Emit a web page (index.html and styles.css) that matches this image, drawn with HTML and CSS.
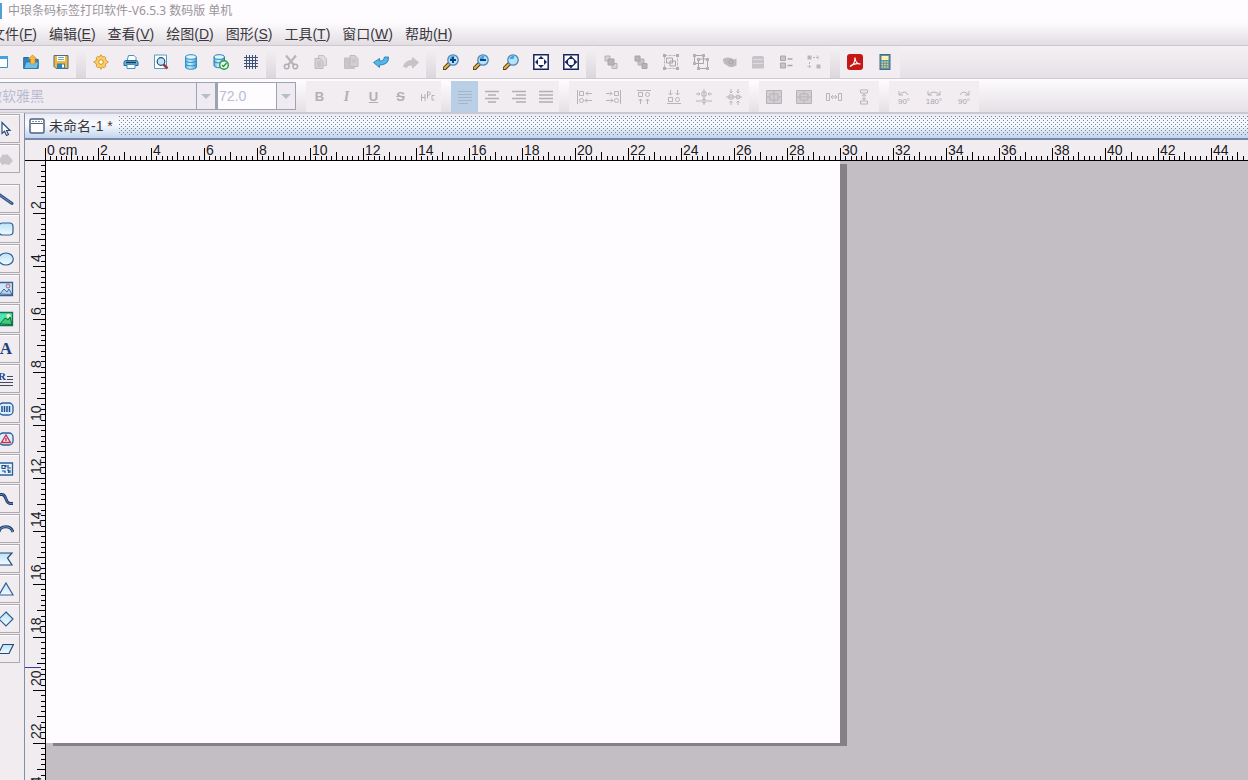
FILE: index.html
```html
<!DOCTYPE html>
<html lang="zh-CN">
<head>
<meta charset="utf-8">
<title>中琅条码标签打印软件</title>
<link rel="stylesheet" href="styles.css">
</head>
<body>
<svg class="defs" aria-hidden="true">
  <defs>
    <linearGradient id="sky" x1="0" y1="0" x2="0" y2="1"><stop offset="0" stop-color="#b9e2f7"/><stop offset="1" stop-color="#f4fbff"/></linearGradient>
    <linearGradient id="blue" x1="0" y1="0" x2="1" y2="0"><stop offset="0" stop-color="#56b4e4"/><stop offset=".4" stop-color="#d3f0fc"/><stop offset="1" stop-color="#3d9fd6"/></linearGradient>
    <pattern id="hticks" width="53" height="12" patternUnits="userSpaceOnUse">
      <path class="tick" d="M0 0h1v12h-1zM26 4h1v8h-1zM5 8h1v4h-1zM11 8h1v4h-1zM16 8h1v4h-1zM21 8h1v4h-1zM32 8h1v4h-1zM37 8h1v4h-1zM42 8h1v4h-1zM48 8h1v4h-1z"/>
    </pattern>
    <pattern id="vticks" width="12" height="53" patternUnits="userSpaceOnUse">
      <path class="tick" d="M0 0v1h12v-1zM4 26v1h8v-1zM8 5v1h4v-1zM8 11v1h4v-1zM8 16v1h4v-1zM8 21v1h4v-1zM8 32v1h4v-1zM8 37v1h4v-1zM8 42v1h4v-1zM8 48v1h4v-1z"/>
    </pattern>
    <symbol id="lens" viewBox="0 0 16 16"><path d="M1.500 14.500 6.500 9.500" stroke="#4d3a1c" stroke-width="4" stroke-linecap="round"/><path d="M1.800 14 6 10" stroke="#e3b04b" stroke-width="2.400" stroke-linecap="round"/><circle cx="10" cy="6" r="5.200" fill="#b5e4fa" stroke="#4a87b4" stroke-width="1.300"/><path d="M6.500 5a4 4 0 0 1 5-3l-1 3z" fill="#41a5db"/></symbol>
    <symbol id="frame" viewBox="0 0 16 16"><path d="M.8.8h14.400v14.400H.8z" fill="#fff" stroke="#17275d" stroke-width="1.500"/></symbol>
  </defs>
</svg>
<div class="app">
  <header class="title">
    <span class="title-icon"></span>
    <span>中琅条码标签打印软件-V6.5.3 数码版 单机</span>
  </header>
  <nav class="menu">
    <button>文件(<u>F</u>)</button><button>编辑(<u>E</u>)</button><button>查看(<u>V</u>)</button><button>绘图(<u>D</u>)</button><button>图形(<u>S</u>)</button><button>工具(<u>T</u>)</button><button>窗口(<u>W</u>)</button><button>帮助(<u>H</u>)</button>
  </nav>

  <div class="bar">
    <div class="group">
      <button aria-label="新建"><svg viewBox="0 0 16 16"><path d="M1.500 2.500h13v11h-13z" fill="#fff" stroke="#3c8ec4"/><path d="M1 2h14v3H1z" fill="#3fa3dc"/></svg></button>
      <button aria-label="打开"><svg viewBox="0 0 16 16"><path d="M.7 3.500h5l1 2h8.500v9H.7z" fill="#2f86c0" stroke="#256b9d"/><path d="M1 14.500 3 8h12.500l-1.300 6.500z" fill="#6cc1ea" stroke="#256b9d" stroke-width=".7"/><path d="m9.500 1 4.500 4h-2v5H7.500V5h-2z" fill="#f6b943" stroke="#c98a22" stroke-width=".7"/></svg></button>
      <button aria-label="保存"><svg viewBox="0 0 16 16"><path d="M1 1.500h14v13H3l-2-2z" fill="#f1b83c" stroke="#4f6b86"/><path d="M4 2h8v5H4z" fill="#fff"/><path d="M5 3.500h6M5 5.500h6" stroke="#68a6cc"/><path d="M4 9.500h8v5H4z" fill="#2e83b9"/><path d="M9 10.500h2v3H9z" fill="#fff"/></svg></button>
    </div>
    <span class="grip"></span>
    <div class="group">
      <button aria-label="设置"><svg viewBox="0 0 16 16"><path d="m8 .7 1.500 2.300 2-.6 1.300 1.300-.5 2L15.300 8l-3 2 .5 2.300-1.500 1.300-2-.6L8 15.300 6.500 13l-2 .6-1.300-1.300.5-2.300L.7 8l3-2-.5-2.300 1.300-1.300 2 .6z" fill="#fbd069" stroke="#d59c3d"/><circle cx="8" cy="8" r="2.300" fill="#fff" stroke="#cf8c22"/></svg></button>
      <button aria-label="打印"><svg viewBox="0 0 16 16"><path d="M4 7 5.500 1.500H11l2 2V7" fill="#fff" stroke="#3f93c4"/><path d="M1 8.500Q1 6.500 3 6.500h10q2 0 2 2v3H1z" fill="#64b3dd" stroke="#2a6591"/><path d="M3 8.500h10" stroke="#173d5f" stroke-width="1.500"/><path d="M4 10.500h8v4H4z" fill="#fff" stroke="#3f93c4"/></svg></button>
      <button aria-label="打印预览"><svg viewBox="0 0 16 16"><path d="M1.500 1h12v13.500h-12z" fill="#fff" stroke="#4e9cc9"/><path d="m10.500 10.500 4 4" stroke="#9a3b45" stroke-width="2.500"/><circle cx="8" cy="7.500" r="3.800" fill="#bde7f9" stroke="#2c4a69" stroke-width="1.200"/></svg></button>
      <button aria-label="数据库"><svg viewBox="0 0 16 16"><path d="M2.500 3v10c0 3 11 3 11 0V3" fill="url(#blue)" stroke="#2c8fc6"/><path d="M2.500 6.500c0 2.500 11 2.500 11 0M2.500 10c0 2.500 11 2.500 11 0" fill="none" stroke="#2c8fc6"/><ellipse cx="8" cy="3" rx="5.500" ry="2.300" fill="#e1f6ff" stroke="#2c8fc6"/></svg></button>
      <button aria-label="数据库检查"><svg viewBox="0 0 16 16"><path d="M1 3v8.500c0 3 10.500 3 10.500 0V3" fill="url(#blue)" stroke="#2c7fae"/><path d="M1 7c0 2.500 10.500 2.500 10.500 0" fill="none" stroke="#2c7fae"/><ellipse cx="6.200" cy="3" rx="5.200" ry="2.300" fill="#e1f6ff" stroke="#2c7fae"/><circle cx="11" cy="11" r="4.300" fill="#edfbed" stroke="#249a49" stroke-width="1.400"/><path d="m9 11 1.500 1.500 3-3.500" fill="none" stroke="#249a49" stroke-width="1.400"/></svg></button>
      <button aria-label="网格"><svg viewBox="0 0 16 16"><path d="M3.500 1v14M6.500 1v14M9.500 1v14M12.500 1v14M1 3.500h14M1 6.500h14M1 9.500h14M1 12.500h14" stroke="#3b5379"/></svg></button>
    </div>
    <span class="grip"></span>
    <div class="group">
      <button disabled aria-label="剪切"><svg viewBox="0 0 16 16"><path d="M3 1.500 11 11M13 1.500 5 11" stroke="#b9b5ba" stroke-width="2.200"/><circle cx="3.700" cy="12.500" r="2.300" fill="none" stroke="#b1adb2" stroke-width="1.500"/><circle cx="12.300" cy="12.500" r="2.300" fill="none" stroke="#b1adb2" stroke-width="1.500"/></svg></button>
      <button disabled aria-label="复制"><svg viewBox="0 0 16 16"><path d="M5.500 1.500h5l3 3v7h-8z" fill="#dedadf" stroke="#c3bfc4"/><path d="M2 4.500h5l3 3v7H2z" fill="#d5d1d6" stroke="#bdb9be"/><path d="M4 8h4M4 10h4M4 12h4" stroke="#bdb9be"/></svg></button>
      <button disabled aria-label="粘贴"><svg viewBox="0 0 16 16"><path d="M1.500 4h10v10.500h-10z" fill="#c9c5ca" stroke="#c3bfc4"/><path d="M7 1.500h5l3 3v8H7z" fill="#d3cfd4" stroke="#bdb9be"/><path d="M9 6h4M9 8h4" stroke="#c0bcc1"/></svg></button>
      <button aria-label="撤销"><svg viewBox="0 0 16 16"><path d="m.5 8.500 6-4v2.500q4 .5 5-4h4q.5 8-9 8v2.500z" fill="#55b7e9" stroke="#2b7eb0" stroke-width=".9"/></svg></button>
      <button disabled aria-label="重做"><svg viewBox="0 0 16 16"><path d="m15.500 8.500-6-5v3q-7-.5-9 6l3 1q1-3 6-2.500v3z" fill="#c7c3c8" stroke="#bfbbc0" stroke-width=".8"/></svg></button>
    </div>
    <span class="grip"></span>
    <div class="group">
      <button aria-label="放大"><svg viewBox="0 0 16 16"><use href="#lens"/><path d="M7 6h6M10 3v6" stroke="#153d83" stroke-width="2"/></svg></button>
      <button aria-label="缩小"><svg viewBox="0 0 16 16"><use href="#lens"/><path d="M7 6h6" stroke="#153d83" stroke-width="2"/></svg></button>
      <button aria-label="缩放"><svg viewBox="0 0 16 16"><use href="#lens"/></svg></button>
      <button aria-label="适合页面"><svg viewBox="0 0 16 16"><use href="#frame"/><path d="m8 2-3 3h6zM8 14l-3-3h6zM2 8l3-3v6zM14 8l-3-3v6z" fill="#17275d"/></svg></button>
      <button aria-label="适合内容"><svg viewBox="0 0 16 16"><use href="#frame"/><path d="M6 4.500h4L11.500 6v4L10 11.500H6L4.500 10V6z" fill="#fff" stroke="#17275d" stroke-width="1.200"/><path d="m8 1.500-2.500 3h5zM8 14.500l-2.500-3h5zM1.500 8l3-2.500v5zM14.500 8l-3-2.500v5z" fill="#17275d"/></svg></button>
    </div>
    <span class="grip"></span>
    <div class="group">
      <button disabled aria-label="置前"><svg viewBox="0 0 16 16"><path d="M2 2h5v5H2zM9 9.500h5v5H9z" fill="#d8d4d9" stroke="#b5b1b6"/><path d="M5 5h6v6H5z" fill="#b7b3b8" stroke="#a8a4a9"/></svg></button>
      <button disabled aria-label="置后"><svg viewBox="0 0 16 16"><path d="M5 5h6v6H5z" fill="#c5c1c6" stroke="#b3afb4"/><path d="M2 2h5v5H2zM9 9.500h5v5H9z" fill="#b7b3b8" stroke="#a8a4a9"/></svg></button>
      <button disabled aria-label="组合"><svg viewBox="0 0 16 16"><path d="M1.500 1.500h13v13h-13z" fill="none" stroke="#bcb8bd" stroke-dasharray="3 1"/><path d="M3.500 4h6v5h-6zM7 7h5.500v5H7z" fill="#eeeaef" stroke="#a9a5aa"/><path d="M0 0h3v3H0zM13 0h3v3h-3zM0 13h3v3H0zM13 13h3v3h-3z" fill="#b0acb1"/></svg></button>
      <button disabled aria-label="取消组合"><svg viewBox="0 0 16 16"><path d="M1.500 1.500h9v8h-9zM5.500 5h9v9.500h-9z" fill="none" stroke="#a9a5aa"/><path d="M0 0h3v3H0zM9 0h3v3H9zM0 8h3v3H0zM4 4h3v3H4zM13 4h3v3h-3zM4 13h3v3H4zM13 13h3v3h-3z" fill="#b5b1b6"/></svg></button>
      <span class="narrow">
      <button disabled aria-label="锁定"><svg viewBox="0 0 16 16"><path d="M1 5q6-3 11 .5l2.500-1v7Q8 15 4.500 11 1 10 1 5z" fill="#bdb9be"/><circle cx="9" cy="8" r="2" fill="none" stroke="#a8a4a9"/></svg></button>
      <button disabled aria-label="解锁"><svg viewBox="0 0 16 16"><path d="M2 4q0-2 2-2h8q2 0 2 2v10.500H2z" fill="#c7c3c8"/><path d="M3 5.500h10M3 9.500h10" stroke="#dfdbe0"/></svg></button>
      <button disabled aria-label="排列"><svg viewBox="0 0 16 16"><path d="M2.500 2h5v4.500h-5zM2.500 9h5v5h-5z" fill="#c8c4c9" stroke="#aaa6ab"/><path d="M9.500 5h5M9.500 11.500h5" stroke="#aaa6ab" stroke-width="1.500"/></svg></button>
      <button disabled aria-label="替换"><svg viewBox="0 0 16 16"><path d="M1.500 1.500h4v4h-4zM10.500 10.500h4v4h-4z" fill="#bab6bb"/><path d="M7 3.500h5m-1-2 2 2-2 2M3.500 8v6m-2-2 2 2 2-2" fill="none" stroke="#b3afb4" stroke-dasharray="2 1"/></svg></button>
      </span>
    </div>
    <span class="grip"></span>
    <div class="group">
      <button aria-label="导出PDF"><svg viewBox="0 0 16 16"><rect width="16" height="16" rx="3" fill="#c61616"/><path d="M3 12.500c3-1 5-5 5-9 0 4 2.500 6.500 5.500 6.500-4-1-8 0-10.500 2.500z" fill="none" stroke="#fff" stroke-width="1.200"/></svg></button>
      <button aria-label="计算器"><svg viewBox="0 0 16 16"><rect x="3" y=".5" width="10" height="15" fill="#5d93a8" stroke="#3d6d88"/><path d="M4.500 2h7v4h-7z" fill="#fff2a4"/><path d="M4.500 8h7M4.500 10.500h7M4.500 13h7" stroke="#e3d17a" stroke-width="1.500" stroke-dasharray="1.700 .9"/></svg></button>
    </div>
  </div>

  <div class="bar format">
    <div class="combo family">
      <select disabled aria-label="字体"><option>微软雅黑</option></select><span class="arrow"></span>
    </div>
    <div class="combo size">
      <input type="text" value="72.0" disabled aria-label="字号"><button disabled class="arrow" aria-label="选择字号"></button>
    </div>
    <span class="grip"></span>
    <div class="group text">
      <button disabled><b>B</b></button><button disabled><i>I</i></button><button disabled><u>U</u></button><button disabled><s>S</s></button>
      <button disabled aria-label="字符间距"><svg viewBox="0 0 16 16"><path d="M1.500 5v7M1.500 8.500h3.500M5 5v7M7.500 2.500v7M7.500 3h2l1 1.500-1 1.500h-2M14.500 6.500h-2.500v4.500h2.500" fill="none" stroke="#b3afb4"/></svg></button>
    </div>
    <span class="grip"></span>
    <div class="group text">
      <button disabled class="on" aria-label="左对齐"><svg viewBox="0 0 16 16"><path d="M1 2.500h14M1 5.500h14M1 8.500h14M1 11.500h14M1 14.500h10" stroke="#a5b5c6"/></svg></button>
      <button disabled aria-label="居中"><svg viewBox="0 0 16 16"><path d="M1 2.500h14M4 6h8M1 9.500h14M4 13h8" stroke="#b3afb4" stroke-width="1.300"/></svg></button>
      <button disabled aria-label="右对齐"><svg viewBox="0 0 16 16"><path d="M1 2.500h14M5 6h10M1 9.500h14M5 13h10" stroke="#b3afb4" stroke-width="1.300"/></svg></button>
      <button disabled aria-label="两端对齐"><svg viewBox="0 0 16 16"><path d="M1 2.500h14M1 6h14M1 9.500h14M1 13h14" stroke="#b3afb4" stroke-width="1.500"/></svg></button>
    </div>
    <span class="grip"></span>
    <div class="group line">
      <button disabled aria-label="靠左"><svg viewBox="0 0 16 16"><path d="M1.500 1v14M3.500 2.500h4v4h-4zM16 4.500H10m2-2-2 2 2 2M16 11.500H9m2-2-2 2 2 2"/><circle cx="5.500" cy="11.500" r="2"/></svg></button>
      <button disabled aria-label="靠右"><svg viewBox="0 0 16 16"><path d="M14.500 1v14M8.500 2.500h4v4h-4zM0 4.500h6m-2-2 2 2-2 2M0 11.500h7m-2-2 2 2-2 2"/><circle cx="10.500" cy="11.500" r="2"/></svg></button>
      <button disabled aria-label="靠上"><svg viewBox="0 0 16 16"><path d="M1 1.500h14M2.500 3.500h4v4h-4zM4.500 15v-5m-2 2 2-2 2 2M11.500 15v-5m-2 2 2-2 2 2"/><circle cx="11.500" cy="5.500" r="2"/></svg></button>
      <button disabled aria-label="靠下"><svg viewBox="0 0 16 16"><path d="M1 14.500h14M2.500 8.500h4v4h-4zM4.500 1v5m-2-2 2 2 2-2M11.500 1v5m-2-2 2 2 2-2"/><circle cx="11.500" cy="10.500" r="2"/></svg></button>
      <button disabled aria-label="水平居中"><svg viewBox="0 0 16 16"><path d="M8 0v16M6 3h4v4H6zM0 5h4m-1.500-1.500L4 5 2.500 6.500M16 5h-4m1.500-1.500L12 5l1.500 1.500M0 12h5M16 12h-5"/><circle cx="8" cy="12" r="2"/></svg></button>
      <button disabled aria-label="垂直居中"><svg viewBox="0 0 16 16"><path d="M0 8h16M3 6h4v4H3zM5 0v4M3.500 2.500 5 4l1.500-1.500M5 16v-4m-1.500 1.500L5 12l1.500 1.500M12 0v4m-1.500-1.500L12 4l1.500-1.500M12 16v-4m-1.500 1.500L12 12l1.500 1.500"/><circle cx="12" cy="8" r="2"/></svg></button>
    </div>
    <span class="grip"></span>
    <div class="group line">
      <button disabled aria-label="页面水平居中"><svg viewBox="0 0 16 16"><path fill="#d2ced3" d="M.5 1.500h15v13H.5z"/><path d="M8 2v12M4 5h8v6H4zM1 8h3M15 8h-3"/></svg></button>
      <button disabled aria-label="页面垂直居中"><svg viewBox="0 0 16 16"><path fill="#d2ced3" d="M.5 1.500h15v13H.5z"/><path d="M1 8h14M4 5h8v6H4zM8 2v3M8 14v-3"/></svg></button>
      <button disabled aria-label="水平等距"><svg viewBox="0 0 16 16"><path d="M.5 4.500h3v7h-3zM12.500 4.500h3v7h-3zM5 8h6M7 6 5 8l2 2M9 6l2 2-2 2"/></svg></button>
      <button disabled aria-label="垂直等距"><svg viewBox="0 0 16 16"><path d="M4.500 1h7v3h-7zM4.500 12h7v3h-7zM8 5v6M6 7l2-2 2 2M6 9l2 2 2-2"/></svg></button>
    </div>
    <span class="grip"></span>
    <div class="group line turn">
      <button disabled aria-label="左转90度"><svg viewBox="0 0 20 16"><path d="M5 2v4h4M5 6q6-6 9 0"/><text x="10" y="15">90°</text></svg></button>
      <button disabled aria-label="旋转180度"><svg viewBox="0 0 20 16"><path d="M4 2v4h4M4 6q6-6 12 0M16 2v4h-4"/><text x="10" y="15">180°</text></svg></button>
      <button disabled aria-label="右转90度"><svg viewBox="0 0 20 16"><path d="M15 2v4h-4M15 6q-6-6-9 0"/><text x="10" y="15">90°</text></svg></button>
    </div>
  </div>

  <div class="body">
    <aside class="tools">
      <button aria-label="选择"><svg viewBox="0 0 16 16"><path d="M4 1.500v11l2.500-2.300 2 4.300 2-1-2-4H12z" fill="#fff" stroke="#2c4e7c" stroke-width="1.200"/></svg></button>
      <button disabled aria-label="节点"><svg viewBox="0 0 16 16"><path d="m1 9 4-6 2 1 2-1 4 4 2 3-4 4-4-1-3 1z" fill="#c9c5ca"/></svg></button>
      <span class="split"></span>
      <button aria-label="直线"><svg viewBox="0 0 16 16"><path d="m1 3.500 13 9" stroke="#2e4f88" stroke-width="3" stroke-linecap="round"/><path d="m1 3.500 13 9" stroke="#6c91c1"/></svg></button>
      <button aria-label="矩形"><svg viewBox="0 0 16 16"><rect x="1" y="2" width="14" height="12" rx="3.500" fill="url(#sky)" stroke="#2f5e95" stroke-width="1.200"/></svg></button>
      <button aria-label="椭圆"><svg viewBox="0 0 16 16"><ellipse cx="8" cy="8" rx="7.300" ry="6" fill="url(#sky)" stroke="#2f5e95" stroke-width="1.200"/></svg></button>
      <button aria-label="图片"><svg viewBox="0 0 16 16"><path d="M1 1.500h13.500v13H1z" fill="#cfe6f8" stroke="#346296" stroke-width="1.300"/><circle cx="10" cy="5" r="2" fill="#f0cdd3" stroke="#8d6f8c"/><path d="m2 13 4-5 3 3 2-3 3 5.500z" fill="#b9d2ec" stroke="#456e9c"/></svg></button>
      <button aria-label="图库"><svg viewBox="0 0 16 16"><path d="M1 1.500h13.500v13H1z" fill="#50e4b4" stroke="#16705d" stroke-width="1.300"/><circle cx="10.500" cy="5" r="2" fill="#f6f5a2"/><path d="m2 13 5-6 3 2 2-3 2 7.500z" fill="#43c97a" stroke="#14683b"/></svg></button>
      <button class="letter">A</button>
      <button aria-label="富文本" class="rich"><svg viewBox="0 0 16 16"><text x="0" y="9">R</text><path d="M9 5.500h6M9 8.500h6M1 11.500h14M1 14.500h14" stroke="#3d4a60"/></svg></button>
      <button aria-label="条形码"><svg viewBox="0 0 16 16"><rect x="1" y="2" width="14" height="12" rx="4" fill="#d9efff" stroke="#2e6099" stroke-width="1.300"/><path d="M4 5v6M6.500 5v6M9 5v6M11.500 5v6" stroke="#234c8b" stroke-width="1.500"/></svg></button>
      <button aria-label="图形码"><svg viewBox="0 0 16 16"><rect x="1" y="2" width="14" height="12" rx="4" fill="#d9efff" stroke="#2e6099" stroke-width="1.300"/><path d="m8 4-4.500 7.500h9zM8 7v3" fill="#ffe9ed" stroke="#c0304e" stroke-width="1.400"/></svg></button>
      <button aria-label="二维码"><svg viewBox="0 0 16 16"><path d="M1 2h13.500v12H1z" fill="#e7f4ff" stroke="#2e6099" stroke-width="1.300"/><path d="M4 4.500h3v3H4zM10 4v3h3M4 10h3v2M9 9h1.500v3M12 9v3M8 4v2" fill="none" stroke="#234c8b" stroke-width="1.200"/></svg></button>
      <button aria-label="曲线"><svg viewBox="0 0 16 16"><path d="M1 3.500h3c5 0 3 9 8 9h3" fill="none" stroke="#23406c" stroke-width="2.800"/><path d="M1 3.500h3c5 0 3 9 8 9h3" fill="none" stroke="#5680b5"/></svg></button>
      <button aria-label="弧形"><svg viewBox="0 0 16 16"><path d="M1 11c1-7 12-7 14 0" fill="none" stroke="#23406c" stroke-width="2.800"/><path d="M1 11c1-7 12-7 14 0" fill="none" stroke="#7199cd"/></svg></button>
      <button aria-label="多边形"><svg viewBox="0 0 16 16"><path d="M1 2h13l-4.500 5 4.500 7H1z" fill="url(#sky)" stroke="#234a78" stroke-width="1.200"/></svg></button>
      <button aria-label="三角形"><svg viewBox="0 0 16 16"><path d="m8 2 7 12H1z" fill="url(#sky)" stroke="#2f5e95" stroke-width="1.200"/></svg></button>
      <button aria-label="菱形"><svg viewBox="0 0 16 16"><path d="m8 1 7 7-7 7-7-7z" fill="url(#sky)" stroke="#2f5e95" stroke-width="1.200"/></svg></button>
      <button aria-label="平行四边形"><svg viewBox="0 0 16 16"><path d="M5 3.500h10.500L11 12.500H.5z" fill="url(#sky)" stroke="#234a78" stroke-width="1.200"/></svg></button>
    </aside>

    <main class="work">
      <div class="tabs">
        <button class="tab"><svg viewBox="0 0 16 16"><rect x="1" y="1" width="14" height="14" rx="1.500" fill="#fff" stroke="#4f617e" stroke-width="1.500"/><path d="M2 5.500h12" stroke="#4f617e"/><path d="M3 3.500h10" stroke="#7f90aa" stroke-dasharray="2 1"/></svg>未命名-1 *</button>
        <span class="dots"></span>
      </div>
      <div class="ruler-top">
        <svg class="ticks"><rect width="100%" height="12" fill="url(#hticks)"/></svg>
        <div class="labels"><span>0 cm</span><span>2</span><span>4</span><span>6</span><span>8</span><span>10</span><span>12</span><span>14</span><span>16</span><span>18</span><span>20</span><span>22</span><span>24</span><span>26</span><span>28</span><span>30</span><span>32</span><span>34</span><span>36</span><span>38</span><span>40</span><span>42</span><span>44</span></div>
      </div>
      <div class="ruler-left">
        <svg class="ticks"><rect width="12" height="100%" fill="url(#vticks)"/></svg>
        <div class="labels"><span>2</span><span>4</span><span>6</span><span>8</span><span>10</span><span>12</span><span>14</span><span>16</span><span>18</span><span>20</span><span>22</span><span>24</span></div>
        <span class="marker"></span>
      </div>
      <div class="canvas"><div class="page"></div></div>
    </main>
  </div>
</div>
</body>
</html>
```
FILE: styles.css
```css
* { box-sizing: border-box; }

body {
  margin: 0;
  overflow: hidden;
  background: #f0ecf0;
  color: #3b383e;
  font: 14px/20px "Liberation Sans", "Noto Sans CJK SC", sans-serif;
}

button {
  margin: 0;
  padding: 0;
  border: 0;
  background: none;
  color: inherit;
  font: inherit;
}

svg { display: block; flex: none; width: 16px; height: 16px; }
.defs { position: absolute; width: 0; height: 0; }

/* The window hangs a little over the left edge of the desktop */
.app {
  display: flex;
  flex-direction: column;
  height: 100vh;
  margin-left: -14px;
}

.title {
  display: flex;
  align-items: center;
  gap: 6px;
  height: 22px;
  background: #fefcfe;
  color: #99959a;
  font: 12px/20px "Noto Sans", "Noto Sans CJK SC", sans-serif;
}
.title-icon { width: 16px; height: 16px; background: #4f9fd0; }

.menu {
  display: flex;
  gap: 12px;
  height: 24px;
  padding-left: 5px;
  background: linear-gradient(#fefcfe, #e2dde2);
  border-bottom: 1px solid #cdc8ce;
  white-space: nowrap;
}
.menu u { text-underline-offset: 1px; }

.bar {
  display: flex;
  height: 33px;
  background: linear-gradient(#f4f1f4, #e5e0e5);
  border-bottom: 1px solid #cdc8ce;
}
.group { display: flex; background: #f1edf1; }
.group button {
  display: flex;
  align-items: center;
  justify-content: center;
  width: 30px;
}
.group .narrow { display: flex; margin-right: 2px; }
.group .narrow button { width: 28px; }
.grip { width: 10px; background: linear-gradient(#f4f1f4, #dcd7dd); }

.format {
  height: 34px;
  padding-top: 2px;
  background: linear-gradient(#fefcfe, #e5e0e5);
}
.format .grip { background: linear-gradient(#fefcfe, #e5e0e5); }
.combo {
  display: flex;
  height: 28px;
  margin-top: 1px;
  border: 1px solid #9ba3b4;
  background: #efebf1;
}
.combo select,
.combo input {
  flex: 1;
  min-width: 0;
  margin: 0;
  padding: 0 0 0 1px;
  border: 0;
  border-radius: 0;
  background: #efebf1;
  color: #b8bdd1;
  opacity: 1;
  font: 14px/20px "Liberation Sans", "Noto Sans CJK SC", sans-serif;
  appearance: none;
}
.combo input { background: #fefcfe; }
.family { width: 230px; }
.size { width: 80px; border-left-width: 2px; }
.arrow {
  display: flex;
  align-items: center;
  justify-content: center;
  width: 19px;
  border-left: 1px solid #9ba3b4;
}
.arrow::before {
  content: "";
  border: 5px solid transparent;
  border-top-color: #b4bfd0;
  border-bottom: 0;
}
.text button { width: 27px; color: #b3afb4; font: bold 13px/20px "Liberation Sans", sans-serif; }
.text i { font-family: "Liberation Serif", serif; font-size: 14px; }
.group .on { background: #b9cfe5; }
.line svg { fill: none; stroke: #b7b3b8; }
.turn svg { width: 20px; }
.turn text {
  fill: #aaa6ab;
  stroke: none;
  font: 8px "Liberation Sans", sans-serif;
  text-anchor: middle;
}

.body { display: flex; flex: 1; min-height: 0; }

.tools {
  display: flex;
  flex: none;
  flex-direction: column;
  gap: 1px;
  width: 38px;
  padding: 1px 0 0 6px;
  overflow: hidden;
}
.tools button {
  display: flex;
  flex: none;
  align-items: center;
  justify-content: center;
  width: 28px;
  height: 29px;
  border: 1px solid #aeaab2;
  box-shadow: inset 1px 1px #fefcfe;
}
.tools .split { flex: none; height: 9px; }
.tools .letter { color: #203f7d; font: bold 17px/20px "Liberation Serif", serif; }
.rich text { fill: #203f7d; font: bold 11px "Liberation Serif", serif; }

.work {
  display: grid;
  flex: 1;
  grid-template: 27px 21px 1fr / 21px 1fr;
  min-width: 0;
  border-left: 1px solid #858ea5;
}
.tabs {
  display: flex;
  grid-column: 1 / 3;
  background: linear-gradient(#e9eaf4, #fbfcff 40%, #c2d5ed);
  border-top: 1px solid #c3cbdc;
  border-bottom: 2px solid #7888ab;
}
.tab {
  display: flex;
  align-items: center;
  gap: 4px;
  padding: 0 6px 0 4px;
  white-space: nowrap;
}
.dots {
  flex: 1;
  margin: 2px 0;
  background-image:
    conic-gradient(at 1px 1px, transparent 75%, #72829d 0),
    conic-gradient(at 1px 1px, transparent 75%, #72829d 0);
  background-size: 4px 4px;
  background-position: 0 0, 2px 2px;
}

.ruler-top {
  display: grid;
  grid-column: 1 / 3;
  padding-left: 20px;
  overflow: hidden;
  border-bottom: 1px solid #000;
}
.ruler-top .ticks { align-self: end; width: 100%; height: 12px; }
.ticks, .labels { grid-area: 1 / 1; min-width: 0; min-height: 0; }
.tick { fill: #000; }
.labels { display: flex; color: #1c1a1e; }
.ruler-top .labels span { flex: none; width: 53px; padding-left: 2px; }

.ruler-left {
  display: grid;
  position: relative;
  min-height: 0;
  overflow: hidden;
  border-right: 1px solid #000;
}
.ruler-left .ticks { justify-self: end; width: 12px; height: 100%; margin-top: -1px; }
.ruler-left .labels { flex-direction: column; padding-left: 1px; }
.ruler-left .labels span {
  flex: none;
  width: 20px;
  height: 53px;
  padding-top: 5px;
  writing-mode: vertical-rl;
  transform: rotate(180deg);
}
.marker {
  position: absolute;
  top: 506px;
  left: 0;
  width: 16px;
  height: 1px;
  background: #3a3a9c;
}

.canvas { min-width: 0; min-height: 0; overflow: hidden; background: #c3bec4; }
.page {
  width: 794px;
  height: 582px;
  background: #fefcfe;
  box-shadow: 7px 3px #857f86;
}
```
